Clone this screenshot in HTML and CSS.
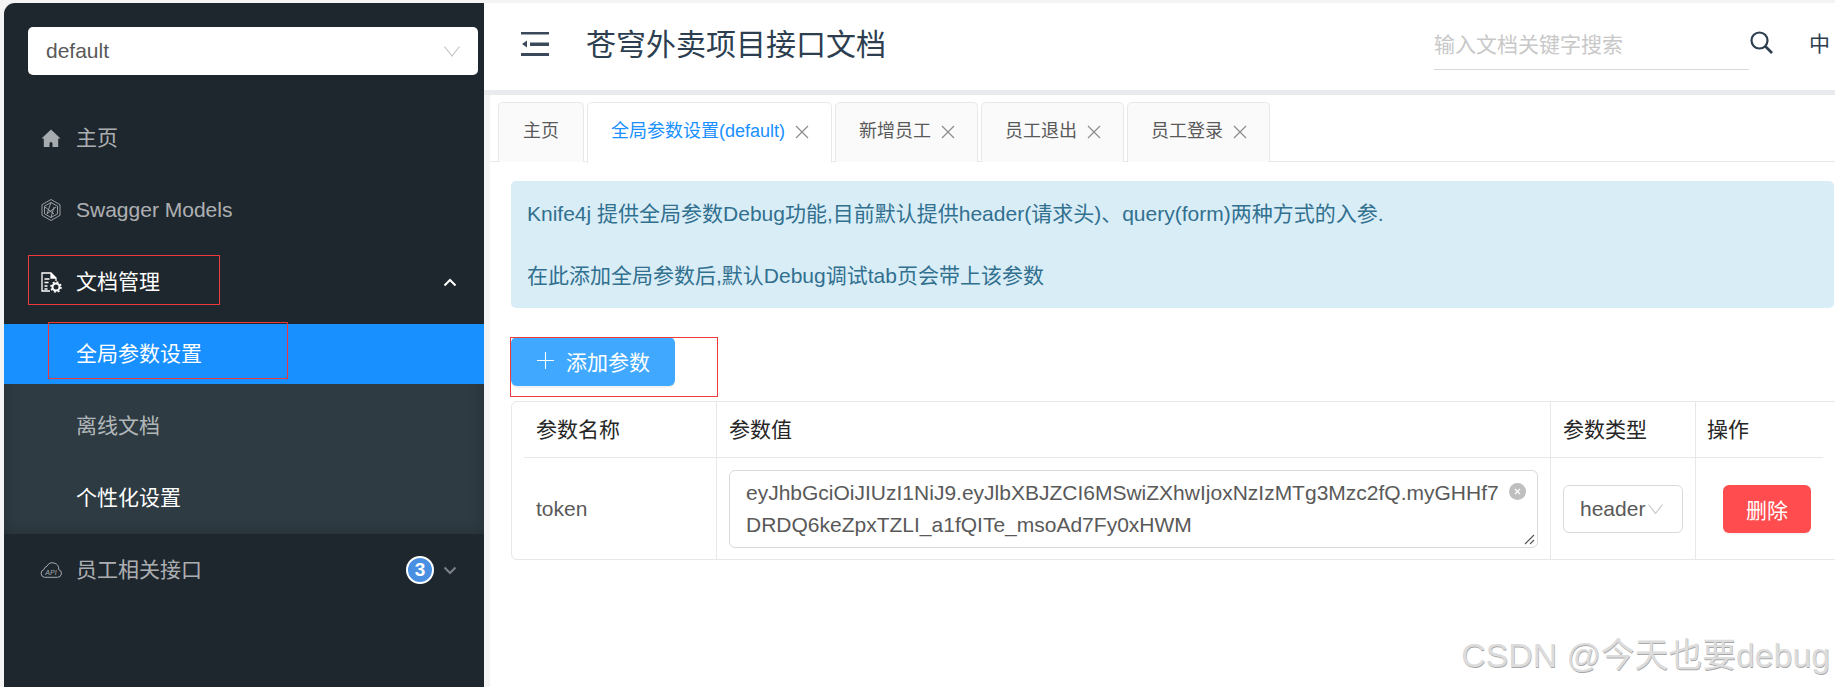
FILE: index.html
```html
<!DOCTYPE html>
<html lang="zh">
<head>
<meta charset="utf-8">
<title>苍穹外卖项目接口文档</title>
<link rel="stylesheet" href="styles.css">
</head>
<body>
<div class="page">
  <aside class="sidebar">
    <div class="group-select">
      <span>default</span>
      <svg class="select-arrow" width="16" height="11" viewBox="0 0 16 11"><path d="M0.5 0.5 8 10 15.5 0.5" fill="none" stroke="#c4c4c4" stroke-width="1.2"/></svg>
    </div>
    <nav class="menu">
      <div class="item">
        <svg class="ico" width="22" height="22" viewBox="0 0 22 22"><path d="M11 2.500 1.500 11.500h2.300v8.500h14.400v-8.500h2.300zM9.500 20v-3.500a1.500 1.500 0 0 1 3 0V20z" fill="#a6abaf" fill-rule="evenodd"/></svg>
        <span>主页</span>
      </div>
      <div class="item">
        <svg class="ico" width="22" height="24" viewBox="0 0 22 24" fill="none" stroke="#a6abaf" stroke-width=".9"><path d="M11 1.500 20 6.700v10.600L11 22.500 2 17.300V6.700z"/><path d="M11 4.500 17.500 8.200v7.600L11 19.500 4.500 15.800V8.200z"/><path d="M11 4.500 7 15.800 16 9M5 9l9 7M11 19.500 14 9"/></svg>
        <span>Swagger Models</span>
      </div>
      <div class="item item-open">
        <svg class="ico" width="22" height="22" viewBox="0 0 22 22" fill="none" stroke="#fff" stroke-width="1.300"><path d="M10 20H2V2h9l5 5v3"/><path d="M11 2v5h5" fill="#fff"/><path d="M4.500 8h5M4.500 11.500h4M4.500 15h3M4.500 18h3"/><circle cx="16" cy="16" r="3.500" stroke-width="2"/><circle cx="16" cy="16" r="5" stroke-width="1.600" stroke-dasharray="2 1.900"/></svg>
        <span>文档管理</span>
        <svg class="chev" width="14" height="9" viewBox="0 0 14 9"><path d="M1.500 7.500 7 2l5.500 5.500" fill="none" stroke="#fff" stroke-width="2"/></svg>
        <i class="mark mark-docs"></i>
      </div>
      <div class="sub">
        <div class="sub-item sub-active">全局参数设置<i class="mark mark-global"></i></div>
        <div class="sub-item">离线文档</div>
        <div class="sub-item sub-bright">个性化设置</div>
      </div>
      <div class="item">
        <svg class="ico" width="22" height="16" viewBox="0 0 22 16"><path d="M4.500 15.300h13a4 4 0 0 0 1.200-7.800A6.200 6.200 0 0 0 7 4.200 4 4 0 0 0 4 7.500a4 4 0 0 0 .5 7.800z" fill="none" stroke="#a6abaf" stroke-width="1"/><text x="11" y="12.500" class="api-text">API</text></svg>
        <span>员工相关接口</span>
        <b class="badge">3</b>
        <svg class="chev" width="14" height="9" viewBox="0 0 14 9"><path d="M1.500 1.500 7 7l5.500-5.500" fill="none" stroke="#7b8186" stroke-width="2"/></svg>
      </div>
    </nav>
  </aside>
  <div class="right">
    <header class="topbar">
      <svg class="fold" width="28" height="24" viewBox="0 0 28 24"><path d="M0 0h28v2.500H0zM9 10.500h19v3.500H9zM0 21h28v3H0zM6 8.500v7L1 12z" fill="#3b4a5a"/></svg>
      <h1 class="title">苍穹外卖项目接口文档</h1>
      <div class="search">输入文档关键字搜索</div>
      <svg class="search-ico" width="23" height="23" viewBox="0 0 23 23" fill="none" stroke="#2c3e50"><circle cx="9.500" cy="9.500" r="8" stroke-width="2.200"/><path d="M15.500 15.500 22 22" stroke-width="2.600"/></svg>
      <span class="lang">中</span>
    </header>
    <main class="content">
      <div class="tabs">
        <div class="tab tab-home">主页</div>
        <div class="tab tab-active"><span class="tab-label">全局参数设置(default)</span><svg class="close" width="14" height="14" viewBox="0 0 14 14"><path d="M1 1l12 12M13 1 1 13" stroke="#8c8c8c" stroke-width="1.200"/></svg></div>
        <div class="tab"><span class="tab-label">新增员工</span><svg class="close" width="14" height="14" viewBox="0 0 14 14"><path d="M1 1l12 12M13 1 1 13" stroke="#8c8c8c" stroke-width="1.200"/></svg></div>
        <div class="tab"><span class="tab-label">员工退出</span><svg class="close" width="14" height="14" viewBox="0 0 14 14"><path d="M1 1l12 12M13 1 1 13" stroke="#8c8c8c" stroke-width="1.200"/></svg></div>
        <div class="tab"><span class="tab-label">员工登录</span><svg class="close" width="14" height="14" viewBox="0 0 14 14"><path d="M1 1l12 12M13 1 1 13" stroke="#8c8c8c" stroke-width="1.200"/></svg></div>
      </div>
      <div class="panel">
        <div class="alert">Knife4j 提供全局参数Debug功能,目前默认提供header(请求头)、query(form)两种方式的入参.<br><br>在此添加全局参数后,默认Debug调试tab页会带上该参数</div>
        <div class="add-row">
          <button class="add-btn" type="button"><svg width="17" height="17" viewBox="0 0 17 17"><path d="M8.500 0v17M0 8.500h17" stroke="#fff" stroke-width="1.100"/></svg>添加参数</button>
          <i class="mark mark-add"></i>
        </div>
        <div class="params">
          <div class="grid">
            <div class="th">参数名称</div>
            <div class="th">参数值</div>
            <div class="th">参数类型</div>
            <div class="th th-last">操作</div>
            <div class="td">token</div>
            <div class="td">
              <div class="value">eyJhbGciOiJIUzI1NiJ9.eyJlbXBJZCI6MSwiZXhwIjoxNzIzMTg3Mzc2fQ.myGHHf7<br>DRDQ6keZpxTZLI_a1fQITe_msoAd7Fy0xHWM
                <svg class="clear" width="17" height="17" viewBox="0 0 17 17"><circle cx="8.500" cy="8.500" r="8.500" fill="#bfbfbf"/><path d="M6 6l5 5M11 6l-5 5" stroke="#fff" stroke-width="1.200"/></svg>
                <svg class="grip" width="11" height="11" viewBox="0 0 11 11"><path d="M1 10 10 1M6 10l4-4" stroke="#555" stroke-width="1.100"/></svg>
              </div>
            </div>
            <div class="td">
              <div class="type">header<svg width="15" height="10" viewBox="0 0 15 10"><path d="M0.500 0.500 7.500 9.500 14.500 0.500" fill="none" stroke="#c4c4c4" stroke-width="1.100"/></svg></div>
            </div>
            <div class="td td-last"><button class="del-btn" type="button">删除</button></div>
          </div>
        </div>
      </div>
    </main>
  </div>
  <div class="watermark">CSDN @今天也要debug</div>
</div>
</body>
</html>
```
FILE: styles.css
```css
* { box-sizing: border-box; }
html, body { margin: 0; height: 100%; overflow: hidden; }
body {
  font-family: "Liberation Sans", "Noto Sans CJK SC", sans-serif;
  font-size: 21px;
  color: #595959;
  background: #f4f4f4;
}
.page {
  position: relative;
  display: flex;
  height: 687px;
  padding: 3px 0 0 4px;
  overflow: hidden;
}

/* sidebar */
.sidebar {
  flex: 0 0 480px;
  background: #1f272e;
  border-top-left-radius: 11px;
  padding-top: 24px;
  color: rgba(255, 255, 255, .65);
}
.group-select {
  display: flex;
  align-items: center;
  justify-content: space-between;
  height: 48px;
  margin: 0 6px 0 24px;
  padding: 0 18px;
  background: #fff;
  border-radius: 5px;
  color: #595959;
}
.menu { display: flex; flex-direction: column; margin-top: 27px; }
.item {
  position: relative;
  display: flex;
  align-items: center;
  flex: none;
  height: 60px;
  margin: 6px 0;
  padding-left: 36px;
  line-height: 60px;
}
.ico { flex: 0 0 22px; margin-right: 14px; }
.api-text { font-size: 7px; font-style: italic; fill: #a6abaf; text-anchor: middle; }
.item-open { color: #fff; }
.chev { position: absolute; left: 439px; top: 26px; }
.badge {
  position: absolute;
  left: 402px;
  top: 16px;
  width: 28px;
  height: 28px;
  border: 2px solid #fff;
  border-radius: 50%;
  background: #4a90e2;
  color: #fff;
  font-size: 19px;
  font-weight: 700;
  line-height: 24px;
  text-align: center;
}
.sub {
  margin-top: 6px;
  padding-bottom: 6px;
  background: #2e3b42;
  box-shadow: inset 0 0 14px rgba(0, 0, 0, .22);
}
.sub-item {
  position: relative;
  height: 60px;
  margin-bottom: 12px;
  padding-left: 72px;
  line-height: 60px;
}
.sub-item:last-child { margin-bottom: 0; }
.sub-active { background: #1890ff; color: #fff; }
.sub-bright { color: #fff; }
.mark { position: absolute; border: 1px solid #f0393c; }
.mark-docs { left: 24px; top: 3px; width: 192px; height: 50px; }
.mark-global { left: 44px; top: -2px; width: 240px; height: 57px; }
.mark-add { left: -1px; top: 0; width: 208px; height: 60px; }

/* header */
.right { flex: 1; display: flex; flex-direction: column; min-width: 0; }
.topbar {
  display: flex;
  align-items: center;
  height: 92px;
  padding: 0 5px 5px 37px;
  background: #fff;
  border-bottom: 5px solid #e8eaee;
}
.fold { flex: none; }
.title {
  margin: 2px 0 0 37px;
  font-size: 30px;
  font-weight: 400;
  line-height: 40px;
  color: #2c3e50;
}
.search {
  width: 315px;
  height: 48px;
  margin: 3px 1px 0 auto;
  border-bottom: 1px solid #d9d9d9;
  color: #c8c8c8;
  line-height: 46px;
}
.search-ico { margin-right: 36px; margin-top: -3px; }
.lang { color: #2c3e50; line-height: 30px; }

/* content */
.content {
  flex: 1;
  margin-left: 6px;
  padding-top: 7px;
  background: #fff;
}
.tabs {
  display: flex;
  gap: 3px;
  height: 60px;
  padding-left: 8px;
  border-bottom: 1px solid #e8e8e8;
}
.tab {
  display: flex;
  align-items: center;
  height: 60px;
  padding: 0 22px 7px 23px;
  background: #fafafa;
  border: 1px solid #e8e8e8;
  border-bottom: 0;
  border-radius: 5px 5px 0 0;
  font-size: 18px;
}
.tab-home { padding: 0 24px 7px; }
.tab-active { background: #fff; color: #1890ff; height: 61px; padding-bottom: 8px; }
.close { margin: 5px 0 0 10px; }
.panel { padding: 19px 1px 0 21px; }
.alert {
  height: 127px;
  padding: 17px 16px;
  background: #d9edf7;
  border-radius: 5px;
  color: #31708f;
  line-height: 31px;
}
.add-row { position: relative; margin-top: 29px; height: 49px; }
.add-btn {
  display: flex;
  align-items: center;
  gap: 12px;
  width: 164px;
  height: 49px;
  padding: 0 0 2px 26px;
  border: 0;
  border-radius: 6px;
  background: #40a9ff;
  color: #fff;
  font: inherit;
  box-shadow: 0 2px 0 rgba(0, 0, 0, .05);
}
.params {
  margin: 15px -8px 0 0;
  padding: 0 12px;
  border: 1px solid #e8e8e8;
  border-radius: 6px;
}
.grid { display: grid; grid-template-columns: 193px 834px 145px 127px; width: 1299px; }
.th {
  height: 56px;
  padding: 0 12px;
  border-right: 1px solid #e8e8e8;
  border-bottom: 1px solid #e8e8e8;
  color: #262626;
  line-height: 55px;
}
.th-last { border-right: 0; padding-left: 11px; }
.td {
  display: flex;
  align-items: center;
  height: 101px;
  padding: 0 12px;
  border-right: 1px solid #e8e8e8;
}
.value {
  position: relative;
  width: 809px;
  height: 78px;
  padding: 6px 16px;
  border: 1px solid #d9d9d9;
  border-radius: 6px;
  line-height: 32px;
  white-space: nowrap;
}
.clear { position: absolute; right: 11px; top: 12px; }
.grip { position: absolute; right: 2px; bottom: 2px; }
.type {
  display: flex;
  align-items: center;
  gap: 3px;
  width: 120px;
  height: 48px;
  padding-left: 16px;
  border: 1px solid #d9d9d9;
  border-radius: 6px;
  white-space: nowrap;
}
.td-last { border-right: 0; padding-left: 27px; }
.del-btn {
  width: 90px;
  height: 48px;
  padding: 0;
  border: 0;
  border-radius: 6px;
  background: #ff4d4f;
  color: #fff;
  font: inherit;
  box-shadow: 0 2px 0 rgba(0, 0, 0, .04);
}
.watermark {
  position: absolute;
  right: 5px;
  top: 634px;
  font-size: 33.8px;
  line-height: 42px;
  white-space: nowrap;
  color: #dcdcdc;
  text-shadow: .5px .5px .5px #a8a8a8;
}
```
